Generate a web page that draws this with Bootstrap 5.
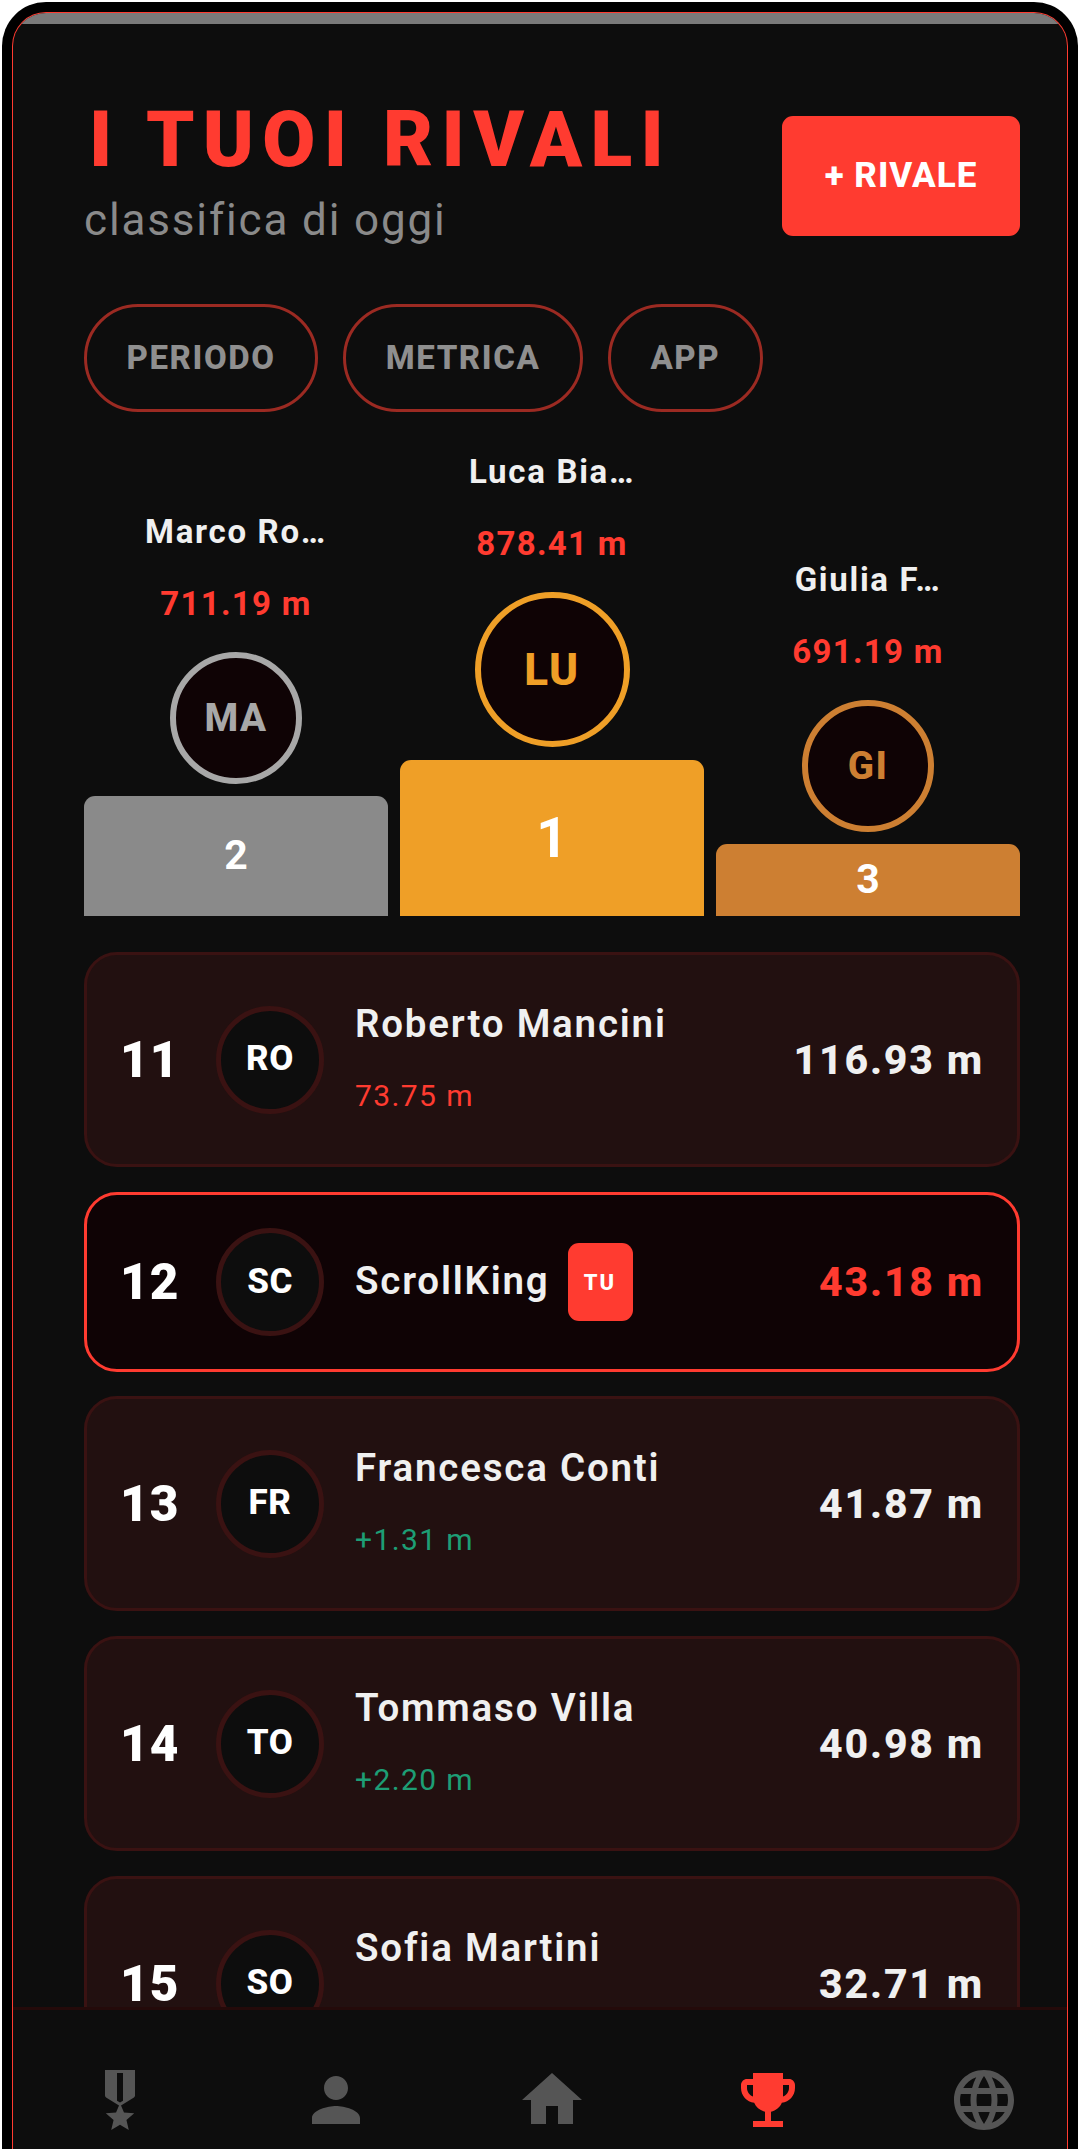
<!DOCTYPE html>
<html lang="it">
<head>
    <meta charset="UTF-8">
    <meta name="viewport" content="width=device-width, initial-scale=1.0">
    <title>I tuoi rivali</title>
    <link href="https://cdn.jsdelivr.net/npm/bootstrap@5.3.3/dist/css/bootstrap.min.css" rel="stylesheet">
    <style>
    /* cornice telefono */
    body { background: #fff; font-family: Roboto, "Liberation Sans", sans-serif; overflow: hidden; }
    .phone-frame { background: #000; margin: 2px 0 0 2px; width: 1076px; height: 2147px; padding: 10px 0 0 10px; border-radius: 44px 44px 0 0; }
    .phone-screen { width: 1056px; height: 2137px; border: 1px solid #ff3b30; border-bottom: 0; border-radius: 34px 34px 0 0; overflow: hidden; background: #0d0d0d; }
    .app-canvas { width: 1080px; height: 2136px; margin-left: -1px; }
    .status-strip { height: 11px; background: #7a7a7a; }

    /* testata */
    .top-head { padding: 71px 72px 0; }
    .page-title { font-size: 77px; font-weight: 900; line-height: 90px; letter-spacing: 8.35px; color: #ff3b30; margin: 0 0 0 5px; }
    .page-sub { font-size: 44px; font-weight: 400; line-height: 52px; letter-spacing: 1.85px; color: #8a8a8a; margin-top: 9px; }
    .add-btn { width: 238px; height: 120px; margin-top: 21px; background: #ff3b30; border: 0; border-radius: 11px; color: #fff; font-size: 35px; font-weight: 800; letter-spacing: 1px; }
    .filter-row { padding: 58px 72px 0; gap: 25px; }
    .filter-pill { height: 108px; padding: 0 39.5px; border: 3px solid #9b2a22; color: #8f8f8f; font-size: 33px; font-weight: 800; letter-spacing: 1.6px; background: transparent; }

    /* podio */
    .podium-row { padding: 40px 72px 0; gap: 12px; }
    .podium-col { width: 304px; }
    .podium-name { font-size: 33px; font-weight: 700; line-height: 39px; letter-spacing: 1.7px; color: #f0f0f0; }
    .podium-val { font-size: 33px; font-weight: 700; line-height: 39px; letter-spacing: 1.3px; color: #ff3b30; margin: 33px 0 29px; }
    .podium-ava { width: 132px; height: 132px; background: #0f0305; border: 6px solid; font-size: 38.5px; font-weight: 800; letter-spacing: 1.5px; margin-bottom: 12px; }
    .ava-gold { width: 155px; height: 155px; font-size: 44px; color: #ef9f27; border-color: #ef9f27; margin-bottom: 13px; }
    .ava-silver { color: #a8a8a8; border-color: #a8a8a8; }
    .ava-bronze { color: #cd7f32; border-color: #cd7f32; }
    .podium-bar { border-radius: 11px 11px 0 0; color: #fff; font-weight: 700; }
    .bar-gold { height: 156px; background: #ef9f27; font-size: 55px; }
    .bar-silver { height: 120px; background: #8a8a8a; font-size: 41px; }
    .bar-bronze { height: 72px; background: #cd7f32; font-size: 41px; }

    /* classifica */
    .rank-list { flex: 1 1 0; min-height: 0; overflow: hidden; padding: 36px 72px 0; gap: 25px; }
    .rank-item { flex: none; border: 3px solid #3a1212; border-radius: 33px; background: #221010; padding: 33px; }
    .rank-item.is-me { border-color: #ff3b30; background: #0f0305; margin-bottom: -1px; }
    .rank-pos { width: 96px; font-size: 49.5px; font-weight: 900; line-height: 46px; letter-spacing: 1px; color: #fff; }
    .rank-ava { width: 108px; height: 108px; margin-right: 31px; background: #0d0d0d; border: 5.5px solid #3a1212; color: #fff; font-size: 35px; font-weight: 800; letter-spacing: .5px; }
    .rank-text { padding: 13px 0 18px; }
    .rank-item.is-me .rank-text { padding: 0; }
    .rank-name { font-size: 38.5px; font-weight: 600; line-height: 45px; letter-spacing: 1.8px; color: #f0f0f0; }
    .rank-sub { font-size: 30px; font-weight: 400; line-height: 35px; letter-spacing: 1.4px; margin-top: 32px; }
    .sub-down { color: #ff3b30; }
    .sub-up { color: #1d9e75; }
    .rank-val { font-size: 41px; font-weight: 800; line-height: 48px; letter-spacing: 1.8px; color: #f0f0f0; }
    .is-me .rank-val { color: #ff3b30; }
    .me-tag { width: 65px; height: 78px; margin-left: 18px; background: #ff3b30; border-radius: 11px; color: #fff; font-size: 22px; font-weight: 800; letter-spacing: 2px; }

    /* barra in basso */
    .bottom-bar { height: 142px; background: #0d0d0d; border-top: 3px solid #240a0a; padding-top: 54px; }
    .bottom-bar svg { width: 72px; height: 72px; fill: #555; display: block; }
    .bottom-bar .is-on svg { fill: #ff3b30; }
    </style>
</head>
<body>
    <div class="phone-frame">
        <div class="phone-screen">
            <div class="app-canvas d-flex flex-column">
                <div class="status-strip"></div>

                <div class="top-head d-flex justify-content-between align-items-start">
                    <div>
                        <h1 class="page-title">I TUOI RIVALI</h1>
                        <div class="page-sub">classifica di oggi</div>
                    </div>
                    <button type="button" class="btn add-btn">+ RIVALE</button>
                </div>

                <div class="filter-row d-flex">
                    <button type="button" class="btn rounded-pill filter-pill">PERIODO</button>
                    <button type="button" class="btn rounded-pill filter-pill">METRICA</button>
                    <button type="button" class="btn rounded-pill filter-pill">APP</button>
                </div>

                <div class="podium-row d-flex align-items-end">
                    <div class="podium-col text-center">
                        <div class="podium-name">Marco Ro…</div>
                        <div class="podium-val">711.19 m</div>
                        <div class="podium-ava ava-silver rounded-circle d-flex align-items-center justify-content-center mx-auto">MA</div>
                        <div class="podium-bar bar-silver d-flex align-items-center justify-content-center">2</div>
                    </div>
                    <div class="podium-col text-center">
                        <div class="podium-name">Luca Bia…</div>
                        <div class="podium-val">878.41 m</div>
                        <div class="podium-ava ava-gold rounded-circle d-flex align-items-center justify-content-center mx-auto">LU</div>
                        <div class="podium-bar bar-gold d-flex align-items-center justify-content-center">1</div>
                    </div>
                    <div class="podium-col text-center">
                        <div class="podium-name">Giulia F…</div>
                        <div class="podium-val">691.19 m</div>
                        <div class="podium-ava ava-bronze rounded-circle d-flex align-items-center justify-content-center mx-auto">GI</div>
                        <div class="podium-bar bar-bronze d-flex align-items-center justify-content-center">3</div>
                    </div>
                </div>

                <div class="rank-list d-flex flex-column">
                    <div class="rank-item d-flex align-items-center">
                        <div class="rank-pos">11</div>
                        <div class="rank-ava rounded-circle d-flex align-items-center justify-content-center">RO</div>
                        <div class="rank-text flex-grow-1">
                            <div class="rank-name">Roberto Mancini</div>
                            <div class="rank-sub sub-down">73.75 m</div>
                        </div>
                        <div class="rank-val">116.93 m</div>
                    </div>
                    <div class="rank-item is-me d-flex align-items-center">
                        <div class="rank-pos">12</div>
                        <div class="rank-ava rounded-circle d-flex align-items-center justify-content-center">SC</div>
                        <div class="rank-text flex-grow-1 d-flex align-items-center">
                            <div class="rank-name mb-1">ScrollKing</div>
                            <div class="me-tag d-flex align-items-center justify-content-center">TU</div>
                        </div>
                        <div class="rank-val">43.18 m</div>
                    </div>
                    <div class="rank-item d-flex align-items-center">
                        <div class="rank-pos">13</div>
                        <div class="rank-ava rounded-circle d-flex align-items-center justify-content-center">FR</div>
                        <div class="rank-text flex-grow-1">
                            <div class="rank-name">Francesca Conti</div>
                            <div class="rank-sub sub-up">+1.31 m</div>
                        </div>
                        <div class="rank-val">41.87 m</div>
                    </div>
                    <div class="rank-item d-flex align-items-center">
                        <div class="rank-pos">14</div>
                        <div class="rank-ava rounded-circle d-flex align-items-center justify-content-center">TO</div>
                        <div class="rank-text flex-grow-1">
                            <div class="rank-name">Tommaso Villa</div>
                            <div class="rank-sub sub-up">+2.20 m</div>
                        </div>
                        <div class="rank-val">40.98 m</div>
                    </div>
                    <div class="rank-item d-flex align-items-center">
                        <div class="rank-pos">15</div>
                        <div class="rank-ava rounded-circle d-flex align-items-center justify-content-center">SO</div>
                        <div class="rank-text flex-grow-1">
                            <div class="rank-name">Sofia Martini</div>
                            <div class="rank-sub sub-up">&nbsp;</div>
                        </div>
                        <div class="rank-val">32.71 m</div>
                    </div>
                </div>

                <nav class="bottom-bar d-flex flex-none">
                    <div class="flex-fill w-100 d-flex justify-content-center"><svg viewBox="0 0 24 24"><path d="M17 10.43V2H7v8.43c0 .35.18.68.49.86l4.18 2.51-.99 2.34-3.41.29 2.59 2.24L9.07 22 12 20.23 14.93 22l-.78-3.33 2.59-2.24-3.41-.29-.99-2.34 4.18-2.51c.31-.18.49-.51.49-.86zm-4 1.8l-1 .6-1-.6V3h2v9.23z"/></svg></div>
                    <div class="flex-fill w-100 d-flex justify-content-center"><svg viewBox="0 0 24 24"><path d="M12 12c2.21 0 4-1.79 4-4s-1.79-4-4-4-4 1.79-4 4 1.79 4 4 4zm0 2c-2.67 0-8 1.34-8 4v2h16v-2c0-2.66-5.33-4-8-4z"/></svg></div>
                    <div class="flex-fill w-100 d-flex justify-content-center"><svg viewBox="0 0 24 24"><path d="M10 20v-6h4v6h5v-8h3L12 3 2 12h3v8z"/></svg></div>
                    <div class="flex-fill w-100 d-flex justify-content-center is-on"><svg viewBox="0 0 24 24"><path d="M19 5h-2V3H7v2H5c-1.1 0-2 .9-2 2v1c0 2.55 1.92 4.63 4.39 4.94.63 1.5 1.98 2.63 3.61 2.96V19H7v2h10v-2h-4v-3.1c1.63-.33 2.98-1.46 3.61-2.96C19.08 12.63 21 10.55 21 8V7c0-1.1-.9-2-2-2zM5 8V7h2v3.82C5.84 10.4 5 9.3 5 8zm14 0c0 1.3-.84 2.4-2 2.82V7h2v1z"/></svg></div>
                    <div class="flex-fill w-100 d-flex justify-content-center"><svg viewBox="0 0 24 24"><path d="M11.99 2C6.47 2 2 6.48 2 12s4.47 10 9.99 10C17.52 22 22 17.52 22 12S17.52 2 11.99 2zm6.93 6h-2.95c-.32-1.25-.78-2.45-1.38-3.56 1.84.63 3.37 1.91 4.33 3.56zM12 4.04c.83 1.2 1.48 2.53 1.91 3.96h-3.82c.43-1.43 1.08-2.76 1.91-3.96zM4.26 14C4.1 13.36 4 12.69 4 12s.1-1.36.26-2h3.38c-.08.66-.14 1.32-.14 2 0 .68.06 1.34.14 2H4.26zm.82 2h2.95c.32 1.25.78 2.45 1.38 3.56-1.84-.63-3.37-1.9-4.33-3.56zm2.95-8H5.08c.96-1.66 2.49-2.93 4.33-3.56C8.81 5.55 8.35 6.75 8.03 8zM12 19.96c-.83-1.2-1.48-2.53-1.91-3.96h3.82c-.43 1.43-1.08 2.76-1.91 3.96zM14.34 14H9.66c-.09-.66-.16-1.32-.16-2 0-.68.07-1.35.16-2h4.68c.09.65.16 1.32.16 2 0 .68-.07 1.34-.16 2zm.25 5.56c.6-1.11 1.06-2.31 1.38-3.56h2.95c-.96 1.65-2.49 2.93-4.33 3.56zM16.36 14c.08-.66.14-1.32.14-2 0-.68-.06-1.34-.14-2h3.38c.16.64.26 1.31.26 2s-.1 1.36-.26 2h-3.38z"/></svg></div>
                </nav>
            </div>
        </div>
    </div>
    <script src="https://cdn.jsdelivr.net/npm/bootstrap@5.3.3/dist/js/bootstrap.bundle.min.js"></script>
</body>
</html>
